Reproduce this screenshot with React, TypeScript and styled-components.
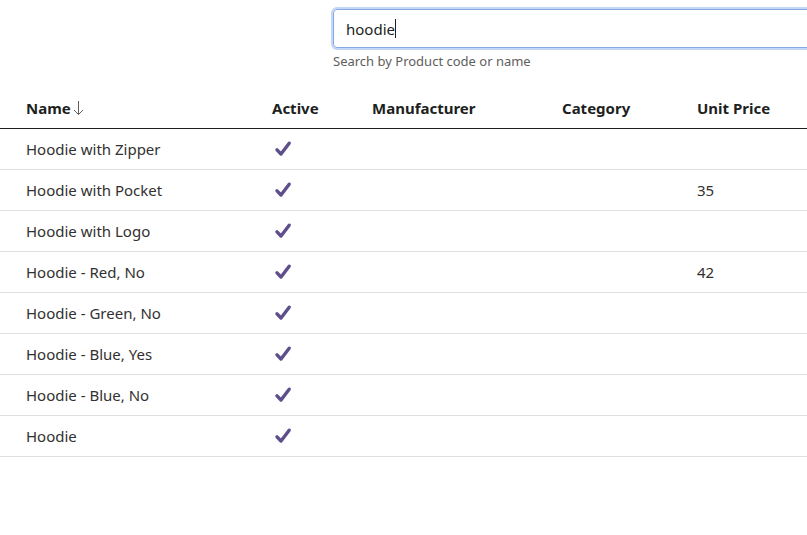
import React from "react";
import styled, { createGlobalStyle } from "styled-components";

const Global = createGlobalStyle`
  html, body { margin: 0; padding: 0; background: #ffffff; }
  body { font-family: "Noto Sans", "Open Sans", sans-serif; color: #323130; overflow: hidden; }
`;

const Page = styled.div`
  width: 807px;
  height: 535px;
  overflow: hidden;
  background: #fff;
`;

const SearchArea = styled.div`
  display: flex;
  flex-direction: column;
  margin-left: 331px;
  padding-top: 7px;
  width: 700px;
`;

const Field = styled.div`
  box-sizing: border-box;
  height: 39px;
  border: 1px solid #86a8e0;
  border-radius: 4px;
  box-shadow: 0 0 0 2px #c2d6f7;
  margin: 2px;
  display: flex;
  align-items: center;
  padding-left: 12px;
  font-size: 15px;
  color: #201f1e;
`;

const Caret = styled.span`
  display: inline-block;
  width: 1px;
  height: 19px;
  background: #201f1e;
`;

const Hint = styled.div`
  font-size: 13px;
  line-height: 18px;
  color: #605e5c;
  margin: 2px 0 0 2px;
`;

const Table = styled.table`
  border-collapse: collapse;
  width: 900px;
  margin-top: 18px;
  table-layout: fixed;
`;

const Th = styled.th<{ $w: number; $first?: boolean }>`
  width: ${(p) => p.$w}px;
  text-align: left;
  font-weight: 700;
  font-size: 15px;
  color: #201f1e;
  height: 40px;
  padding: 0 0 0 ${(p) => (p.$first ? 26 : 12)}px;
  border-bottom: 1px solid #201f1e;
  box-sizing: border-box;
  white-space: nowrap;
`;

const Td = styled.td<{ $first?: boolean }>`
  font-size: 15px;
  color: #323130;
  height: 41px;
  padding: 0 0 0 ${(p) => (p.$first ? 26 : 12)}px;
  border-bottom: 1px solid #e1dfdd;
  box-sizing: border-box;
  white-space: nowrap;
`;

const SortIcon = styled.svg`
  width: 11px;
  height: 16px;
  margin-left: 2px;
  vertical-align: -2px;
`;

const CheckIcon = styled.svg`
  width: 18px;
  height: 18px;
  display: block;
  margin-left: 2px;
`;

const Check = () => (
  <CheckIcon viewBox="0 0 18 18">
    <path
      d="M3 9.8 L7 14 L15.2 3.2"
      fill="none"
      stroke="#5e4f8c"
      strokeWidth="3.4"
      strokeLinecap="round"
      strokeLinejoin="round"
    />
  </CheckIcon>
);

const rows: { name: string; price?: string }[] = [
  { name: "Hoodie with Zipper" },
  { name: "Hoodie with Pocket", price: "35" },
  { name: "Hoodie with Logo" },
  { name: "Hoodie - Red, No", price: "42" },
  { name: "Hoodie - Green, No" },
  { name: "Hoodie - Blue, Yes" },
  { name: "Hoodie - Blue, No" },
  { name: "Hoodie" },
];

export default function App() {
  return (
    <Page>
      <Global />
      <SearchArea>
        <Field>
          hoodie
          <Caret />
        </Field>
        <Hint>Search by Product code or name</Hint>
      </SearchArea>
      <Table>
        <thead>
          <tr>
            <Th $w={260} $first>
              Name
              <SortIcon viewBox="0 0 11 16">
                <path d="M5.5 1 V14.5 M1 10 L5.5 14.5 L10 10" fill="none" stroke="#605e5c" strokeWidth="1" />
              </SortIcon>
            </Th>
            <Th $w={100}>Active</Th>
            <Th $w={190}>Manufacturer</Th>
            <Th $w={135}>Category</Th>
            <Th $w={215}>Unit Price</Th>
          </tr>
        </thead>
        <tbody>
          {rows.map((r) => (
            <tr key={r.name}>
              <Td $first>{r.name}</Td>
              <Td>
                <Check />
              </Td>
              <Td />
              <Td />
              <Td>{r.price ?? ""}</Td>
            </tr>
          ))}
        </tbody>
      </Table>
    </Page>
  );
}
